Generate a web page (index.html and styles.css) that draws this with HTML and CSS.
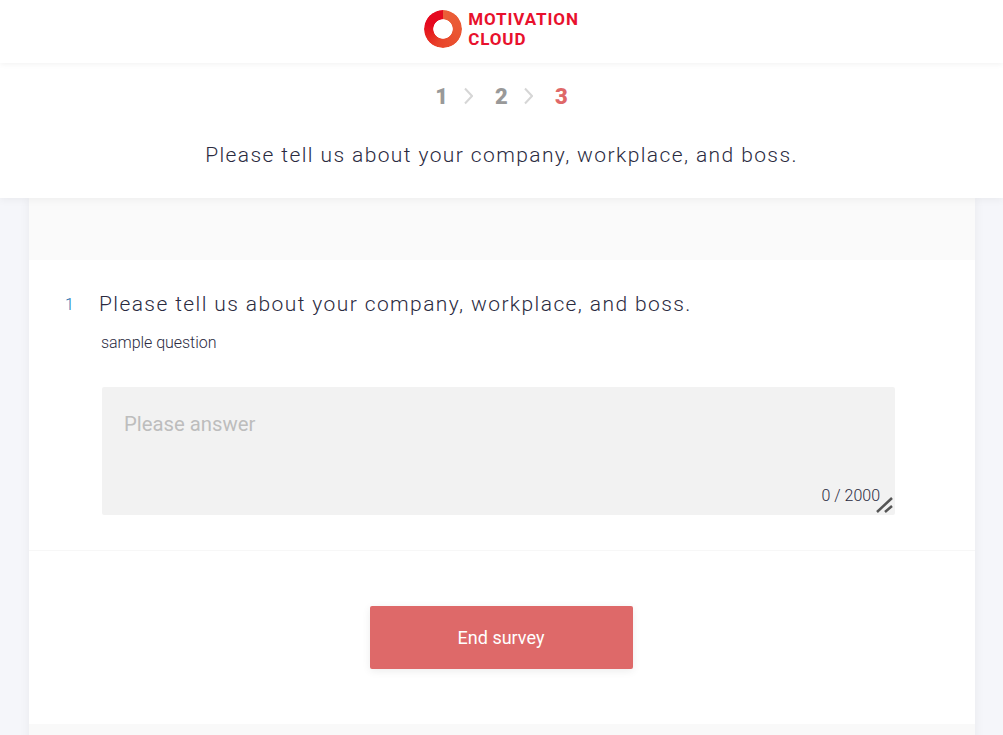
FILE: index.html
```html
<!DOCTYPE html>
<html lang="en">
<head>
    <meta charset="UTF-8">
    <meta name="viewport" content="width=device-width, initial-scale=1.0">
    <title>Motivation Cloud Survey</title>
    <link rel="stylesheet" href="styles.css">
</head>
<body>
    <header class="brand-bar">
        <div class="logo">
            <div class="logo-mark"></div>
            <div class="logo-text">MOTIVATION<br>CLOUD</div>
        </div>
    </header>

    <section class="steps-bar">
        <div class="steps">
            <span class="step step-done">1</span>
            <svg class="chevron" width="9" height="18" viewBox="0 0 9 18"><path d="M1 1.5 L8 9 L1 16.5" fill="none" stroke="#d6d6d6" stroke-width="2"/></svg>
            <span class="step step-done">2</span>
            <svg class="chevron" width="9" height="18" viewBox="0 0 9 18"><path d="M1 1.5 L8 9 L1 16.5" fill="none" stroke="#d6d6d6" stroke-width="2"/></svg>
            <span class="step step-current">3</span>
        </div>
        <h1 class="page-title">Please tell us about your company, workplace, and boss.</h1>
    </section>

    <main class="sheet">
        <div class="sheet-top"></div>
        <div class="question">
            <div class="question-head">
                <span class="question-no">1</span>
                <h2 class="question-title">Please tell us about your company, workplace, and boss.</h2>
            </div>
            <p class="question-note">sample question</p>
            <div class="answer">
                <span class="placeholder">Please answer</span>
                <span class="counter">0 / 2000</span>
                <svg class="grip" width="18" height="16" viewBox="0 0 18 16">
                    <path d="M1 15 L16 1 M9 15 L16 9" fill="none" stroke="#555" stroke-width="2.5"/>
                </svg>
            </div>
        </div>
        <div class="actions">
            <button class="end-btn">End survey</button>
        </div>
        <div class="sheet-bottom"></div>
    </main>
</body>
</html>
```

FILE: styles.css
```css
* {
    box-sizing: border-box;
    font-family: Roboto, sans-serif;
}

html, body {
    height: 735px;
    overflow: hidden;
}

body {
    margin: 0;
    background-color: #f5f6fa;
}

.brand-bar {
    position: relative;
    z-index: 2;
    height: 63px;
    display: flex;
    justify-content: center;
    align-items: center;
    background: white;
    box-shadow: 0 1px 6px rgba(0, 0, 0, 0.06);
}

.logo {
    display: flex;
    align-items: center;
    gap: 6px;
    margin-top: -5px;
}

.logo-mark {
    width: 38px;
    height: 38px;
    border-radius: 50%;
    background: conic-gradient(#ea5f38 0%, #ea5632 30%, #e8432a 55%, #e6201f 70%, #e5091f 80%, #e5091f 100%);
    -webkit-mask: radial-gradient(circle, transparent 9.4px, black 10px);
    mask: radial-gradient(circle, transparent 9.4px, black 10px);
}

.logo-text {
    font-size: 17px;
    line-height: 20px;
    font-weight: 700;
    letter-spacing: 0.9px;
    color: #e8112d;
}

.steps-bar {
    position: relative;
    z-index: 1;
    height: 135px;
    background: white;
    box-shadow: 0 2px 8px rgba(0, 0, 0, 0.05);
    text-align: center;
    padding-top: 21px;
}

.steps {
    display: flex;
    justify-content: center;
    align-items: center;
    height: 24px;
}

.chevron {
    margin: 0 22px 0 16px;
}

.step {
    font-size: 22px;
    font-weight: 900;
}

.step-done {
    color: #999999;
}

.step-current {
    color: #df6868;
}

.page-title {
    margin: 35px 0 0;
    font-size: 21px;
    line-height: 24px;
    font-weight: 300;
    letter-spacing: 1.4px;
    color: #2b2b3f;
}

.sheet {
    width: 946px;
    margin-left: 29px;
    background: white;
    box-shadow: 0 0 10px rgba(0, 0, 0, 0.06);
}

.sheet-top {
    height: 62px;
    background-color: #fafafa;
}

.question {
    height: 291px;
    padding: 31px 0 0 36px;
    border-bottom: 1px solid #f7f7f7;
}

.question-head {
    display: flex;
    align-items: center;
    height: 26px;
}

.question-no {
    width: 34px;
    font-size: 16px;
    font-weight: 300;
    color: #1a6fb0;
}

.question-title {
    margin: 0;
    font-size: 21px;
    line-height: 26px;
    font-weight: 300;
    letter-spacing: 1.4px;
    color: #2b2b3f;
}

.question-note {
    margin: 16px 0 0 36px;
    font-size: 16px;
    line-height: 20px;
    font-weight: 300;
    letter-spacing: -0.05px;
    color: #2b2b3f;
}

.answer {
    position: relative;
    width: 793px;
    height: 128px;
    margin: 34px 0 0 37px;
    padding: 25px 22px;
    background-color: #f2f2f2;
    border-radius: 2px;
}

.placeholder {
    font-size: 20.3px;
    font-weight: 400;
    color: #bdbdbd;
}

.counter {
    position: absolute;
    right: 15px;
    bottom: 10px;
    font-size: 16px;
    font-weight: 300;
    color: #2b2b3f;
}

.grip {
    position: absolute;
    right: 1px;
    bottom: 2px;
}

.actions {
    height: 173px;
    display: flex;
    justify-content: center;
    padding-top: 55px;
    padding-right: 2px;
}

.end-btn {
    width: 263px;
    height: 63px;
    border: none;
    border-radius: 2px;
    background-color: #de6969;
    color: white;
    font-size: 18px;
    cursor: pointer;
    box-shadow: 0 2px 8px rgba(0, 0, 0, 0.08);
}

.sheet-bottom {
    height: 20px;
    background-color: #f9f9f9;
}
```
